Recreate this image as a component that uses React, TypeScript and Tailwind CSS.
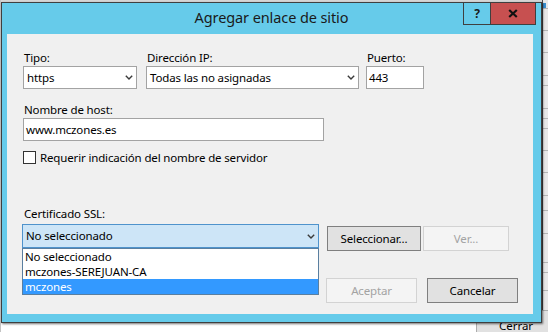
import React from "react";

function Chevron() {
  return (
    <svg width="8" height="5" viewBox="0 0 8 5" className="shrink-0">
      <polyline points="0.8,0.8 4,4 7.2,0.8" fill="none" stroke="#3a3a3a" strokeWidth="1.4" />
    </svg>
  );
}

function Label({ children }: { children: React.ReactNode }) {
  return <div className="h-[17px] leading-[17px] ml-px whitespace-nowrap">{children}</div>;
}

function Select({ value, className = "" }: { value: string; className?: string }) {
  return (
    <div className={`h-[23px] border border-[#a3a3a3] bg-white flex items-center pl-[3px] pr-[3px] leading-[16px] ${className}`}>
      <span className="whitespace-nowrap">{value}</span>
      <span className="ml-auto flex items-center">
        <Chevron />
      </span>
    </div>
  );
}

function Btn({ children, disabled = false, className = "" }: { children: React.ReactNode; disabled?: boolean; className?: string }) {
  return (
    <div
      className={`h-[25px] border flex items-center justify-center leading-[16px] whitespace-nowrap ${
        disabled ? "bg-[#f4f4f4] border-[#d3d3d3] text-[#a3a3a3]" : "bg-[#e1e1e1] border-[#7f7f7f] text-black"
      } ${className}`}
    >
      {children}
    </div>
  );
}

export default function App() {
  const lines = [8, 30, 52, 75, 85, 108, 118, 128, 150, 172, 195, 210, 233, 262, 272, 290];
  return (
    <div className="relative w-[548px] h-[332px] overflow-hidden bg-white font-['Noto_Sans',sans-serif] text-black">
      {/* background behind the dialog */}
      <div className="absolute left-0 top-0 w-[548px] h-[2px] bg-[#d6d6d6]" />
      <div className="absolute left-0 top-0 w-[1px] h-[332px] bg-[#c4c4c4]" />
      <div className="absolute left-[542px] top-0 w-[6px] h-[332px] bg-[#e8e8e8] border-l border-[#4a4a4a]">
        <div className="absolute left-0 top-[3px] w-[3px] h-[6px] bg-[#3a8fd0]" />
        {lines.map((y) => (
          <div key={y} className="absolute left-0 w-[5px] h-px bg-[#b5b5b5]" style={{ top: y }} />
        ))}
      </div>
      <div className="absolute left-[476px] top-[310px] w-[80px] h-[26px] border border-[#adadad] bg-[#e1e1e1] flex items-center justify-center text-[11.5px] leading-[14px] pt-[6px]">
        Cerrar
      </div>

      {/* dialog */}
      <div className="relative ml-[1px] mt-[2px] w-[541px] h-[321px] border border-[#3f3f3f] bg-[#66cbea] flex flex-col shadow-[1px_1px_2px_rgba(0,0,0,0.55)]">
        <div className="relative h-[31px] shrink-0 flex items-center justify-center pb-[2px] text-[14.5px] tracking-[-0.1px] text-[#1a1a1a]">
          Agregar enlace de sitio
          <div className="absolute top-0 right-[5px] flex">
            <div className="w-[27px] h-[22px] border-l border-b border-[#3f3f3f] flex items-center justify-center text-[12px] font-bold leading-none">
              ?
            </div>
            <div className="w-[46px] h-[22px] border-x border-b border-[#3f3f3f] bg-[#c75050] flex items-center justify-center">
              <svg width="10" height="9" viewBox="0 0 10 9">
                <path d="M1.2 1 L8.8 8 M8.8 1 L1.2 8" stroke="#111" strokeWidth="2.2" fill="none" />
              </svg>
            </div>
          </div>
        </div>

        <div className="flex-1 ml-[5px] mr-[8px] mb-[8px] bg-[#f0f0f0] flex flex-col pl-[16px] pt-[15px] pr-[15px] pb-[11px] text-[11.5px] tracking-[-0.15px]">
          <div className="flex">
            <div className="w-[114px] flex flex-col">
              <Label>Tipo:</Label>
              <Select value="https" />
            </div>
            <div className="ml-[9px] w-[213px] flex flex-col">
              <Label>Dirección IP:</Label>
              <Select value="Todas las no asignadas" />
            </div>
            <div className="ml-[7px] w-[58px] flex flex-col">
              <Label>Puerto:</Label>
              <div className="h-[23px] border border-[#a3a3a3] bg-white flex items-center pl-[2px] leading-[16px]">443</div>
            </div>
          </div>

          <div className="mt-[12px]">
            <Label>Nombre de host:</Label>
            <div className="w-[301px] h-[23px] border border-[#a3a3a3] bg-white flex items-center pl-[2px] leading-[16px]">
              www.mczones.es
            </div>
          </div>

          <div className="mt-[10px] h-[13px] flex items-center">
            <div className="w-[13px] h-[13px] border border-[#333333] bg-white shrink-0" />
            <span className="ml-[4px] leading-[16px] whitespace-nowrap">Requerir indicación del nombre de servidor</span>
          </div>

          <div className="mt-[41px] mb-[2px]">
            <Label>Certificado SSL:</Label>
          </div>
          <div className="flex items-start">
            <div className="relative -ml-px w-[297px] h-[24px] border border-[#4f93cc] bg-[#cde5f7] flex items-center pl-[3px] pr-[3px] leading-[16px]">
              <span>No seleccionado</span>
              <span className="ml-auto flex items-center">
                <Chevron />
              </span>
              <div className="absolute left-[-1px] top-[23px] w-[297px] h-[47px] border border-[#5a7fa0] bg-white flex flex-col z-10">
                <div className="h-[15px] leading-[15px] pl-[2px]">No seleccionado</div>
                <div className="h-[15px] leading-[15px] pl-[2px]">mczones-SEREJUAN-CA</div>
                <div className="h-[15px] leading-[15px] pl-[2px] bg-[#3399ff] text-white">mczones</div>
              </div>
            </div>
            <Btn className="ml-[8px] mt-[2px] w-[94px]">Seleccionar...</Btn>
            <Btn disabled className="ml-[2px] mt-[2px] w-[86px]">
              Ver...
            </Btn>
          </div>

          <div className="mt-auto flex justify-end gap-[10px]">
            <Btn disabled className="w-[91px]">
              Aceptar
            </Btn>
            <Btn className="w-[91px]">Cancelar</Btn>
          </div>
        </div>
      </div>
    </div>
  );
}
